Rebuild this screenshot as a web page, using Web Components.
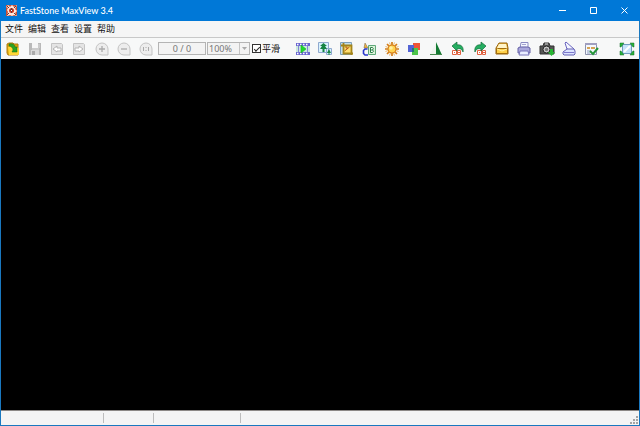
<!DOCTYPE html>
<html lang="zh-CN">
<head>
<meta charset="utf-8">
<title>FastStone MaxView 3.4</title>
<style>
html, body { height: 100%; margin: 0; }
body { font: 9px/12px "Noto Sans", "Noto Sans CJK SC", sans-serif; color: #111; }
</style>
</head>
<body>
<viewer-window>
  <title-bar slot="title">FastStone MaxView 3.4</title-bar>
  <menu-bar slot="menu">
    <menu-entry>文件</menu-entry><menu-entry>编辑</menu-entry><menu-entry>查看</menu-entry><menu-entry>设置</menu-entry><menu-entry>帮助</menu-entry>
  </menu-bar>
  <tool-bar slot="tools">
    <tool-button slot="file" icon="open" label="打开"></tool-button>
    <tool-button slot="file" icon="save" label="保存"></tool-button>
    <tool-button slot="file" icon="prev" label="上一张"></tool-button>
    <tool-button slot="file" icon="next" label="下一张"></tool-button>
    <tool-button slot="file" icon="zoomin" label="放大"></tool-button>
    <tool-button slot="file" icon="zoomout" label="缩小"></tool-button>
    <tool-button slot="file" icon="actual" label="实际大小"></tool-button>
    <zoom-fields slot="fields"></zoom-fields>
    <tool-button slot="edit" icon="film" label="幻灯片"></tool-button>
    <tool-button slot="edit" icon="resize" label="调整大小"></tool-button>
    <tool-button slot="edit" icon="crop" label="裁剪"></tool-button>
    <tool-button slot="edit" icon="draw" label="绘图"></tool-button>
    <tool-button slot="edit" icon="sun" label="光线"></tool-button>
    <tool-button slot="edit" icon="colors" label="颜色"></tool-button>
    <tool-button slot="edit" icon="sharpen" label="锐化"></tool-button>
    <tool-button slot="edit" icon="left" label="向左旋转"></tool-button>
    <tool-button slot="edit" icon="right" label="向右旋转"></tool-button>
    <tool-button slot="edit" icon="mail" label="电子邮件"></tool-button>
    <tool-button slot="edit" icon="print" label="打印"></tool-button>
    <tool-button slot="edit" icon="camera" label="截图"></tool-button>
    <tool-button slot="edit" icon="scan" label="扫描"></tool-button>
    <tool-button slot="edit" icon="settings" label="选项"></tool-button>
    <tool-button slot="end" icon="full" label="全屏"></tool-button>
  </tool-bar>
  <status-bar slot="status"></status-bar>
</viewer-window>

<script>
function define(name, html, setup) {
  const template = document.createElement('template');
  template.innerHTML = html;
  customElements.define(name, class extends HTMLElement {
    constructor() {
      super();
      this.attachShadow({ mode: 'open' }).append(template.content.cloneNode(true));
    }
    connectedCallback() { if (setup) setup(this, this.shadowRoot); }
  });
}

const bubble = inner => `<path d="M8 2a6 6 0 1 0 0 12h6V8a6 6 0 0 0-6-6z" fill="#ededed" stroke="#c3c3c3"/><g stroke="#aaa" fill="none">${inner}</g>`;
const disk = inner => `<path d="M2.500 2.500h10l1 1v10h-11z" fill="#e4e4e4" stroke="#c4c4c4"/>${inner}`;
const tiles = x => `<g fill="#fff" stroke="#e0613f"><path d="M${x}.5 9.5h4v4h-4zM${x + 5}.5 9.5h3v4h-3z"/></g><path d="M${x + 2} 11h1v1h-1zM${x + 6} 11h2v1h-2z" fill="#e0613f"/>`;

const ICONS = {
  open: '<path d="M2 3l2-1h4l1 1h4v11H3l-1-2z" fill="#dca50c" stroke="#b17d10"/><path d="M3 6h7l4 1v6l-1 1H4z" fill="#ffd735"/><path d="M4 3c4-1 6 1 6 3h2v5H7l1-2c0-2-2-4-4-4z" fill="#2ba321" stroke="#146b1b" stroke-width=".5"/>',
  save: '<path d="M2 2h12v12H2z" fill="#b9b9b9"/><path d="M5 2h6v5H5z" fill="#f6f6f6"/><path d="M4 9h8v5H4z" fill="#d9d9d9"/><path d="M5 10h3v4H5z" fill="#aaa"/><path d="M5 8h7M12 3v4" stroke="#ddd"/>',
  prev: disk('<path d="M4 8l4-3v2h4v3H8v1z" fill="#fff" stroke="#b5b5b5"/>'),
  next: disk('<path d="M12 8L8 5v2H4v3h4v1z" fill="#fff" stroke="#b5b5b5"/>'),
  zoomin: bubble('<path d="M5 8h6M8 5v6" stroke-width="1.300"/>'),
  zoomout: bubble('<path d="M5 8h6" stroke-width="1.300"/>'),
  actual: bubble('<path d="M5.500 6v4M8 6v1M8 9v1M10.500 6v4"/>'),
  film: '<path d="M1 2h14v12H1z" fill="#6a66d0"/><path d="M1 5h14v6H1z" fill="#c9e9dc"/><path d="M2 3.500h12M2 12.500h12" stroke="#fff" stroke-width="1.500" stroke-dasharray="1.500 1.500"/><path d="M3.500 5v6M12.500 5v6" stroke="#8484d6"/><path d="M6 4l5 4-5 4z" fill="#21d72d" stroke="#16b61d" stroke-width=".6"/>',
  resize: '<path d="M1.500 1.500h10v10h-10zM9.500 7.500h5v6h-5z" fill="#d9f2fc" stroke="#8fa9cf"/><path d="M6.500 2L3 5h2L3 8h2.500v3h2V8H10L8 5h2z" fill="#168443"/><path d="M12 8l-2 4h1.500v2h1v-2H14z" fill="#168443"/>',
  crop: '<path d="M1.500 1.500h11v12h-11z" fill="#c4e0ee" stroke="#7da0bb"/><path d="M5 5h7v7H5z" fill="#ffdf70"/><path d="M5.500 10l5-4M6 6h2v2" stroke="#b05617" fill="none"/><path d="M4.500 2v10.500H14M2 4.500h10.500V14" fill="none" stroke="#a3841a" stroke-width="1.800"/>',
  draw: '<path d="M7.500 4.500h7v9h-7z" fill="#daf1d8" stroke="#5fa879"/><path d="M9.500 6.500v5h2q2-1.500 0-2.500 1.500-1.500 0-2.500zM9.500 9h2" fill="#fff" stroke="#277f45"/><path d="M3 7l1-5 3 5z" fill="#eeb442" stroke="#786044" stroke-width=".5"/><path d="M6.500 8H4L2.500 9.500v3L4 14h3" fill="none" stroke="#2837cb" stroke-width="1.600"/>',
  sun: '<path d="M8 1v14M1 8h14M3 3l10 10M13 3L3 13" stroke="#d27c18" stroke-width="1.700"/><path d="M5.500 1.500l5 13M10.500 1.500l-5 13M1.500 5.500l13 5M14.500 5.500l-13 5" stroke="#e79a2d" stroke-width=".7"/><circle cx="8" cy="8" r="4" fill="#ffd453" stroke="#d9831c"/><circle cx="7" cy="7" r="1.800" fill="#fff0a0"/>',
  colors: '<path d="M7 2h7v7H7z" fill="#f05436"/><path d="M2 4h6v7H2z" fill="#5364d5"/><path d="M6 7h6v7H6z" fill="#4dc54a"/><path d="M6 7h2v4H6z" fill="#267477"/>',
  sharpen: '<path d="M8 2v11H2z" fill="#eef4ed"/><path d="M8 1l6 13H8z" fill="#137a32"/><path d="M2 13.500h12" stroke="#45864c"/>',
  left: tiles(2) + '<path d="M2 5l5-4v3c4-1 7 2 6 7-1-3-3-4-6-3v2z" fill="#25ae61" stroke="#136c39" stroke-width=".7"/>',
  right: tiles(5) + '<path d="M14 5L9 1v3c-4-1-7 2-6 7 1-3 3-4 6-3v2z" fill="#25ae61" stroke="#136c39" stroke-width=".7"/>',
  mail: '<path d="M2 7l3-5h8l1 5v6H2z" fill="#eab43c" stroke="#95620d"/><path d="M5 3h7l1 4H3z" fill="#fff4c8"/><path d="M2.500 7.500h11v5h-11z" fill="#ffcf46" stroke="#a36d0c"/><path d="M3 8l5 2 5-2" stroke="#fff3a5" fill="none"/>',
  print: '<path d="M5 1.500h7v6H4z" fill="#f5f7ff" stroke="#8b8bc2"/><path d="M2 7l2-1h8l2 1v5H2z" fill="#a9a7dc" stroke="#6461a5"/><path d="M4 10h8l1 4H3z" fill="#e9edff" stroke="#7874b9"/><path d="M6 3.500h4M6 5.500h4" stroke="#a4a4cf"/>',
  camera: '<path d="M1 5h3l1-3h5l1 3h4v8H1z" fill="#555" stroke="#333"/><circle cx="7.500" cy="8.500" r="3.500" fill="#ccc" stroke="#222"/><circle cx="7.500" cy="8.500" r="1.700" fill="#777"/><path d="M9 11h2V8h3v3h2l-3.500 4z" fill="#28b633"/><path d="M6 3h3" stroke="#ddd"/>',
  scan: '<path d="M4 2l1-1 8 7-1 2-6-2z" fill="#f4f6ff" stroke="#6b66bf"/><path d="M2 11l4-3h7l1 2v3l-1 1H3l-1-1z" fill="#dce4ff" stroke="#6560b5"/><path d="M3 11.500h10" stroke="#7d77cb"/>',
  settings: '<path d="M2.500 2.500h11v11h-11z" fill="#f4f8ff" stroke="#8d93ad"/><path d="M2 2h12v2H2z" fill="#a09fbf"/><path d="M4 6h3v2H4zM8 6h4v2H8z" fill="#d6a455"/><path d="M4 10h4M4 12h3" stroke="#8b9abb"/><path d="M7 10l3 3 5-6" fill="none" stroke="#26963a" stroke-width="2"/>',
  full: '<path d="M3.500 3.500h9v9h-9z" fill="#c6e3fa" stroke="#709cc0"/><path d="M5 11L11 5" stroke="#fff" stroke-width="2"/><g fill="#27b538" stroke="#17682e" stroke-width=".5"><path d="M1 2h4L2 6H1zM15 2h-4l3 4h1zM1 14h4l-3-4H1zM15 14h-4l3-4h1z"/></g>'
};

define('viewer-window', `
<style>
:host { display: grid; grid-template-rows: auto auto auto 1fr auto; box-sizing: border-box; height: 100vh; border: 1px solid #1a78bf; border-top: 0; background: #f5f5f5; }
main { background: #000; border-bottom: 1px solid #8c8886; }
</style>
<slot name="title"></slot><slot name="menu"></slot><slot name="tools"></slot><main></main><slot name="status"></slot>`);

define('title-bar', `
<style>
:host { display: flex; align-items: center; height: 21px; margin: 0 -1px; padding-left: 6px; gap: 3px; background: #0078d7; color: #fff; }
h1 { flex: 1; margin: 0; font: 500 9px/12px Lato, sans-serif; }
.logo { width: 11px; height: 11px; }
nav { display: flex; }
button { display: grid; place-items: center; width: 31px; height: 21px; padding: 0; border: 0; background: none; color: #fff; }
button svg { width: 9px; height: 9px; fill: none; stroke: currentColor; }
</style>
<svg class="logo" viewBox="0 0 11 11"><path d="M0 0h11v11H0z" fill="#c95038"/><path d="M0 2l2-2 2 2 2-2 2 2 3-2-2 4 2 2-2 2 2 3-3-1-2 1-2-1-3 1 1-4-1-2 1-2z" fill="#ffe7dc"/><circle cx="5.500" cy="5.500" r="2.500" fill="#d83820"/><path d="M4 5h3M5.500 3v5M1 1l2 2M10 1L8 3M1 10l2-2M10 10L8 8" stroke="#613c3e"/><path d="M5 5h1v1H5z" fill="#fff"/></svg>
<h1><slot></slot></h1>
<nav>
<button aria-label="最小化"><svg viewBox="0 0 9 9"><path d="M1 4.500h7"/></svg></button>
<button aria-label="最大化"><svg viewBox="0 0 9 9"><path d="M1.500 1.500h6v6h-6z"/></svg></button>
<button aria-label="关闭"><svg viewBox="0 0 9 9"><path d="M1.500 1.500l6 6M7.500 1.500l-6 6"/></svg></button>
</nav>`);

define('menu-bar', `
<style>:host { display: flex; align-items: center; gap: 5px; height: 16px; padding-left: 4px; background: #f5f5f5; border-bottom: 1px solid #c8c8c8; }</style>
<slot></slot>`);

define('menu-entry', `
<style>
:host { display: block; }
button { display: block; padding: 0; border: 0; background: none; font: inherit; color: inherit; }
</style><button><slot></slot></button>`);

define('tool-bar', `
<style>
:host { display: flex; align-items: center; height: 21px; padding: 0 4px; background: #f7f8f8; }
.group { display: flex; justify-content: space-between; }
.file { width: 149px; margin-right: 4px; }
.edit { width: 304px; margin-left: 15px; }
.end { margin-left: auto; }
</style>
<div class="group file"><slot name="file"></slot></div>
<slot name="fields"></slot>
<div class="group edit"><slot name="edit"></slot></div>
<div class="end"><slot name="end"></slot></div>`);

define('tool-button', `
<style>
:host { display: block; }
button { display: block; width: 16px; height: 16px; padding: 0; border: 0; background: none; }
svg { display: block; width: 16px; height: 16px; }
</style>
<button><svg viewBox="0 0 16 16" aria-hidden="true"></svg></button>`, (host, root) => {
  root.querySelector('svg').innerHTML = ICONS[host.getAttribute('icon')];
  root.querySelector('button').setAttribute('aria-label', host.getAttribute('label'));
});

define('zoom-fields', `
<style>
:host { display: flex; align-items: center; gap: 1px; color: #777; }
input, select { box-sizing: border-box; height: 13px; margin: 0; border: 1px solid #b4b4b4; border-radius: 0; background: #f3f3f3; color: inherit; font: inherit; line-height: 11px; }
.position { width: 48px; padding: 0; text-align: center; }
.zoom { position: relative; display: flex; }
select { appearance: none; width: 43px; padding: 0 0 0 1px; opacity: 1; }
.zoom svg { position: absolute; top: 1px; right: 1px; width: 10px; height: 11px; pointer-events: none; }
.smooth { display: flex; align-items: center; gap: 1px; margin-left: 1px; color: #111; }
.smooth input { appearance: none; display: grid; place-items: center; width: 9px; height: 9px; border-color: #333; background: #fff; }
.smooth input:checked::before { content: ""; width: 5px; height: 2px; border: solid #222; border-width: 0 0 1px 1px; transform: rotate(-45deg); }
</style>
<input class="position" aria-label="图像位置" value="0 / 0" readonly>
<div class="zoom"><select aria-label="缩放"><option>100%</option></select><svg viewBox="0 0 10 11"><path d="M.5 0v11" stroke="#c4c4c4"/><path d="M3 4h5L5.500 7z" fill="#aaa"/></svg></div>
<label class="smooth"><input type="checkbox" checked>平滑</label>`);

define('status-bar', `
<style>
:host { display: flex; align-items: center; height: 14px; background: #f4f4f4; }
span { box-sizing: border-box; height: 10px; border-right: 1px solid #bdbdbd; }
.name { width: 103px; } .size { width: 50px; } .info { width: 87px; }
svg { width: 9px; height: 9px; margin-left: auto; align-self: end; fill: #a5a5a5; }
</style>
<span class="name"></span><span class="size"></span><span class="info"></span>
<svg viewBox="0 0 9 9"><path d="M6 0h2v2H6zM3 3h2v2H3zM6 3h2v2H6zM0 6h2v2H0zM3 6h2v2H3zM6 6h2v2H6z"/></svg>`);
</script>
</body>
</html>
